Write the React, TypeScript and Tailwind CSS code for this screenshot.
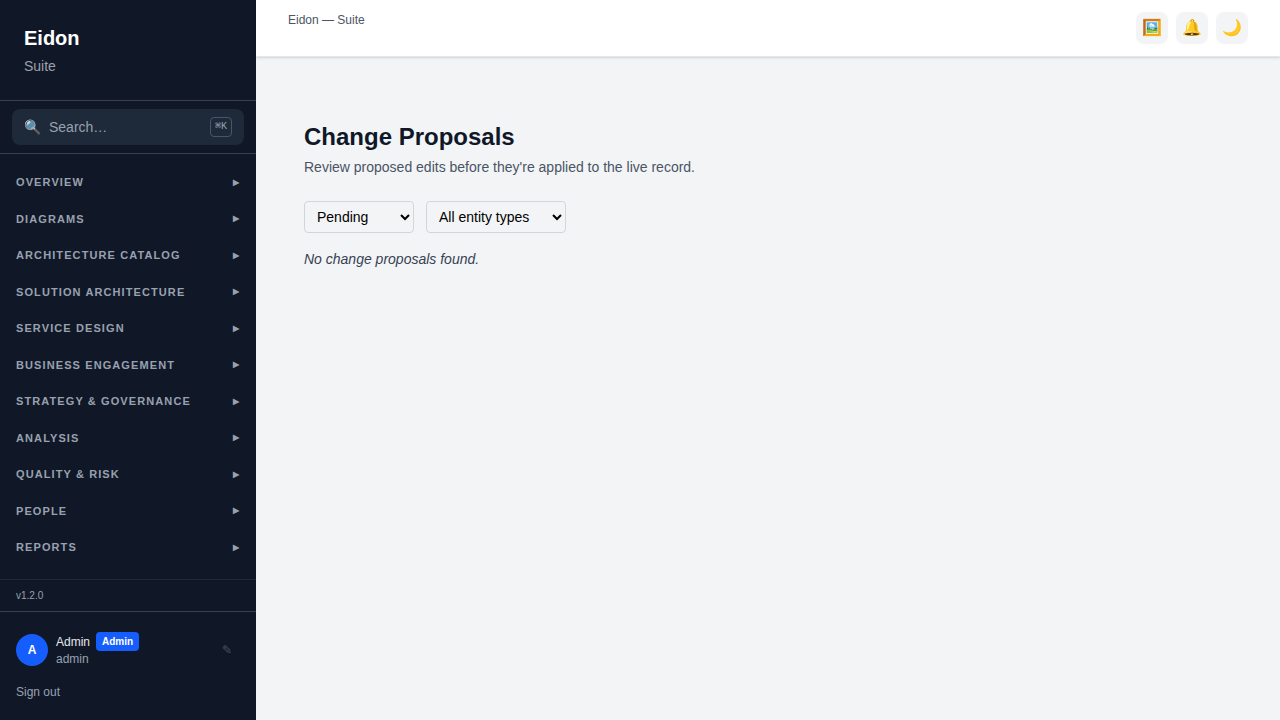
const sections = [
  'Overview',
  'Diagrams',
  'Architecture Catalog',
  'Solution Architecture',
  'Service Design',
  'Business Engagement',
  'Strategy & Governance',
  'Analysis',
  'Quality & Risk',
  'People',
  'Reports',
];

const actions = [
  { icon: '🖼️', label: 'Gallery' },
  { icon: '🔔', label: 'Notifications' },
  { icon: '🌙', label: 'Dark mode' },
];

function Sidebar() {
  return (
    <aside className="flex w-64 shrink-0 flex-col bg-gray-900 text-white">
      <div className="border-b border-gray-700 p-6">
        <h1 className="text-xl font-bold">Eidon</h1>
        <p className="mt-1 text-sm text-gray-400">Suite</p>
      </div>
      <div className="border-b border-gray-700 px-3 py-2">
        <button className="flex w-full items-center gap-2 rounded-lg bg-gray-800 px-3 py-2 text-sm text-gray-400">
          <span>🔍</span>
          <span className="flex-1 text-left">Search…</span>
          <kbd className="rounded border border-gray-600 px-1 py-0.5 font-['Liberation_Mono',monospace] text-[10px]">⌘K</kbd>
        </button>
      </div>
      <nav className="flex-1 overflow-y-auto py-2.5">
        {sections.map((name) => (
          <button
            key={name}
            className="flex w-full items-center justify-between px-4 py-2.5 text-[11px] font-semibold tracking-widest text-gray-400 uppercase"
          >
            <span>{name}</span>
            <span className="text-[8px] tracking-widest">▶</span>
          </button>
        ))}
      </nav>
      <div className="border-t border-gray-800 px-4 py-2 text-[10px] text-gray-400">v1.2.0</div>
      <div className="border-t border-gray-700 px-4 py-5">
        <div className="flex h-9 items-center gap-2">
          <div className="flex size-8 items-center justify-center rounded-full bg-blue-600 text-xs font-bold">A</div>
          <div className="flex-1 self-start text-xs">
            <div className="flex items-center gap-1.5">
              <span className="text-gray-200">Admin</span>
              <span className="rounded bg-blue-600 px-1.5 py-0.5 text-[10px] leading-[15px] font-semibold">Admin</span>
            </div>
            <p className="text-gray-400">admin</p>
          </div>
          <button aria-label="Edit profile" className="px-2 text-xs text-gray-600">✎</button>
        </div>
        <button className="mt-4 block text-xs text-gray-400">Sign out</button>
      </div>
    </aside>
  );
}

export default function App() {
  return (
    <div className="flex h-screen bg-gray-100 font-['Liberation_Sans',sans-serif]">
      <Sidebar />
      <div className="flex min-w-0 flex-1 flex-col">
        <header className="flex items-start justify-between border-b border-gray-200 bg-white px-8 py-3 shadow-sm">
          <span className="text-xs text-gray-600">Eidon — Suite</span>
          <div className="flex gap-2">
            {actions.map(({ icon, label }) => (
              <button key={label} aria-label={label} className="flex size-8 items-center justify-center rounded-lg bg-gray-100 text-base">
                {icon}
              </button>
            ))}
          </div>
        </header>
        <main className="flex-1 px-12 py-16 text-sm">
          <h2 className="text-2xl font-bold text-gray-900">Change Proposals</h2>
          <p className="mt-1 text-gray-600">Review proposed edits before they're applied to the live record.</p>
          <div className="mt-6 flex gap-3">
            <select aria-label="Status" className="w-[110px] rounded border border-gray-300 px-2 py-1.5 text-black">
              <option>Pending</option>
              <option>Approved</option>
              <option>Rejected</option>
            </select>
            <select aria-label="Entity type" className="w-35 rounded border border-gray-300 px-2 py-1.5 text-black">
              <option>All entity types</option>
            </select>
          </div>
          <p className="mt-4 text-gray-700 italic">No change proposals found.</p>
        </main>
      </div>
    </div>
  );
}
